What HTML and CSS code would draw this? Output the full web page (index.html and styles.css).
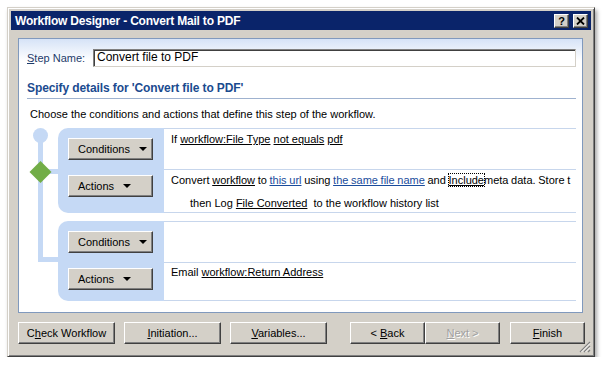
FILE: index.html
```html
<!DOCTYPE html>
<html lang="en">
<head>
  <meta charset="UTF-8" />
  <meta name="viewport" content="width=device-width, initial-scale=1" />
  <title>Workflow Designer - Convert Mail to PDF</title>
  <link rel="stylesheet" href="styles.css">
</head>
<body>
  <div class="window">
    <div class="titlebar">
      <span class="title">Workflow Designer - Convert Mail to PDF</span>
      <span class="caption-btns">
        <span class="cap-btn cap-help">?</span>
        <span class="cap-btn">
          <svg width="9" height="8" viewBox="0 0 9 8"><path d="M1 0.5 L8 7.5 M8 0.5 L1 7.5" stroke="#000" stroke-width="1.8"/></svg>
        </span>
      </span>
    </div>

    <div class="client">
      <div class="panel">
        <div class="step-row">
          <label class="step-label"><u>S</u>tep Name:</label>
          <div class="step-input">Convert file to PDF</div>
        </div>

        <h2 class="heading">Specify details for 'Convert file to PDF'</h2>
        <p class="intro">Choose the conditions and actions that define this step of the workflow.</p>

        <div class="flow">
          <!-- connector tree on the left -->
          <svg class="tree" width="31" height="172" viewBox="0 0 31 172">
            <circle cx="13.5" cy="7.5" r="7.5" fill="#c5d9f5"/>
            <rect x="11" y="7" width="5" height="127" fill="#c5d9f5"/>
            <rect x="11" y="129" width="20" height="5" fill="#c5d9f5"/>
            <rect x="13" y="41" width="18" height="5" fill="#c5d9f5"/>
            <polygon points="13.5,33 24.5,44 13.5,55 2.5,44" fill="#72ad47"/>
          </svg>

          <div class="block block-first">
            <div class="block-btns">
              <span class="menu-btn">Conditions <span class="arrow"></span></span>
              <span class="menu-btn">Actions <span class="arrow"></span></span>
            </div>
            <div class="block-rows">
              <div class="row row-cond">If <span class="ul">workflow:File Type</span> <span class="ul">not equals</span> <span class="ul">pdf</span></div>
              <div class="row row-act row-tall">
                <div class="long-line">Convert <span class="ul">workflow</span> to <span class="lnk">this url</span> using <span class="lnk">the same file name</span> and <span class="focus"><span class="ul">Include</span></span>meta data. Store t</div>
                <div class="then">then Log <span class="ul">File Converted</span> &nbsp;to the workflow history list</div>
              </div>
            </div>
          </div>

          <div class="block block-second">
            <div class="block-btns">
              <span class="menu-btn">Conditions <span class="arrow"></span></span>
              <span class="menu-btn">Actions <span class="arrow"></span></span>
            </div>
            <div class="block-rows">
              <div class="row row-cond"></div>
              <div class="row row-act row-short">Email <span class="ul">workflow:Return Address</span></div>
            </div>
          </div>
        </div>
      </div>

      <div class="footer">
        <span class="btn btn-wide"><span>C<u>h</u>eck Workflow</span></span>
        <span class="btn btn-wide"><span><u>I</u>nitiation...</span></span>
        <span class="btn btn-wide"><span><u>V</u>ariables...</span></span>
        <span class="btn btn-back"><span>&lt; <u>B</u>ack</span></span>
        <span class="btn btn-disabled"><span><u>N</u>ext &gt;</span></span>
        <span class="btn btn-finish"><span><u>F</u>inish</span></span>
      </div>
    </div>

    <svg class="grip" width="12" height="12" viewBox="0 0 12 12">
      <path d="M11 1 L1 11 M11 5 L5 11 M11 9 L9 11" stroke="#808080" stroke-width="1.2"/>
      <path d="M11 2.5 L2.5 11 M11 6.5 L6.5 11" stroke="#fff" stroke-width="1"/>
    </svg>
  </div>
</body>
</html>
```

FILE: styles.css
```css
body {
  margin: 0;
  background: #fff;
  font-family: "Liberation Sans", Arial, sans-serif;
  font-size: 11px;
  color: #000;
}
.window {
  position: relative;
  box-sizing: border-box;
  width: 588px;
  height: 350px;
  margin: 7px 0 0 7px;
  padding: 3px;
  display: flex;
  flex-direction: column;
  background: #d4d0c8;
  border: 1px solid;
  border-color: #d4d0c8 #404040 #404040 #d4d0c8;
  box-shadow: inset 1px 1px #fff, inset -1px -1px #808080, 2px 3px 4px rgba(0, 0, 0, 0.35);
}
.titlebar {
  height: 19px;
  flex: none;
  display: flex;
  align-items: center;
  justify-content: space-between;
  padding: 0 3px 0 4px;
  background: #0a246a;
  color: #fff;
  font-weight: bold;
  font-size: 12px;
  letter-spacing: -0.2px;
}
.caption-btns {
  display: flex;
  gap: 4px;
}
.cap-btn {
  box-sizing: border-box;
  width: 15px;
  height: 14px;
  display: flex;
  align-items: center;
  justify-content: center;
  background: #d4d0c8;
  color: #000;
  border: 1px solid;
  border-color: #fff #404040 #404040 #fff;
  box-shadow: inset -1px -1px #808080;
  font-size: 11px;
  font-weight: bold;
  letter-spacing: 0;
}
.client {
  flex: 1;
  padding: 8px 6px 0 7px;
}
.panel {
  box-sizing: border-box;
  height: 275px;
  margin-right: 2px;
  padding: 0 6px 0 8px;
  border: 1px solid #8099bd;
  background: linear-gradient(#d6e3f7 0, #fff 22px);
  overflow: hidden;
}
.step-row {
  display: flex;
  align-items: center;
  margin-top: 10px;
  height: 18px;
}
.step-label {
  width: 66px;
  color: #1d3b6b;
}
.step-input {
  flex: 1;
  box-sizing: border-box;
  height: 18px;
  padding: 0 3px;
  line-height: 15px;
  font-size: 12px;
  background: #fff;
  border: 1px solid;
  border-color: #808080 #d4d0c8 #d4d0c8 #808080;
  box-shadow: inset 1px 1px #404040;
}
.heading {
  margin: 15px 0 0;
  padding-bottom: 3px;
  border-bottom: 1px solid #9fb2cf;
  font-size: 12px;
  line-height: 13px;
  letter-spacing: -0.1px;
  color: #1b4b8f;
}
.intro {
  margin: 8px 0 0 3px;
  line-height: 14px;
}
.flow {
  margin-top: 7px;
  display: grid;
  grid-template-columns: 31px 1fr;
  grid-template-rows: auto auto;
  row-gap: 8px;
}
.tree {
  grid-column: 1;
  grid-row: 1 / 3;
}
.block {
  grid-column: 2;
  display: grid;
  grid-template-columns: 106px 1fr;
}
.block-first {
  grid-row: 1;
}
.block-second {
  grid-row: 2;
}
.block-btns {
  display: flex;
  flex-direction: column;
  gap: 15px;
  padding: 10px 0 0 10px;
  background: #c5d9f5;
  border-radius: 10px 0 0 10px;
}
.menu-btn {
  box-sizing: border-box;
  width: 85px;
  height: 22px;
  display: flex;
  align-items: center;
  padding-left: 9px;
  background: #d4d0c8;
  border: 1px solid;
  border-color: #fff #404040 #404040 #fff;
  box-shadow: inset -1px -1px #808080;
  white-space: pre;
}
.arrow {
  width: 0;
  height: 0;
  margin-left: 6px;
  border-left: 4px solid transparent;
  border-right: 4px solid transparent;
  border-top: 4px solid #000;
}
.block-rows {
  min-width: 0;
  border-bottom: 1px solid #c7d6ec;
}
.row {
  box-sizing: border-box;
  border-top: 1px solid #c7d6ec;
  padding: 3px 0 0 7px;
  line-height: 14px;
  white-space: nowrap;
  overflow: hidden;
}
.row-cond {
  height: 41px;
}
.row-tall {
  height: 43px;
}
.row-short {
  height: 38px;
  padding-top: 2px;
}
.long-line {
  word-spacing: -0.4px;
}
.then {
  margin: 9px 0 0 19px;
}
.ul {
  text-decoration: underline;
}
.lnk {
  color: #1a4c9c;
  text-decoration: underline;
}
.focus {
  outline: 1px dotted #000;
  outline-offset: 0;
}
.footer {
  display: flex;
  margin-top: 9px;
}
.btn {
  box-sizing: border-box;
  height: 22px;
  width: 75px;
  display: flex;
  align-items: center;
  justify-content: center;
  background: #d4d0c8;
  border: 1px solid;
  border-color: #fff #404040 #404040 #fff;
  box-shadow: inset -1px -1px #808080;
  white-space: pre;
}
.btn-wide {
  width: 97px;
  margin-right: 9px;
}
.btn-wide:nth-child(3) {
  margin-right: 0;
}
.btn-back {
  margin-left: auto;
}
.btn-disabled {
  color: #a0a0a0;
  text-shadow: 1px 1px #fff;
}
.btn-finish {
  margin-left: 10px;
}
.grip {
  position: absolute;
  right: 3px;
  bottom: 3px;
}
```
